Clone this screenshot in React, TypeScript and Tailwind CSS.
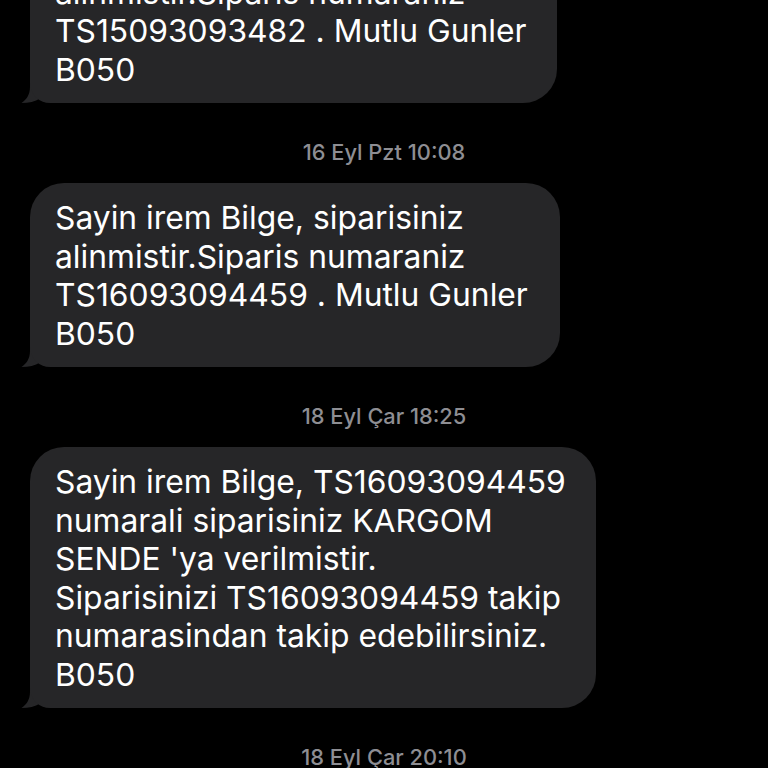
import React from 'react';

type Msg = { time?: string; lines: string[]; width: string };

const messages: Msg[] = [
  {
    lines: ['Sayin irem Bilge, siparisiniz', 'alinmistir.Siparis numaraniz', 'TS15093093482 . Mutlu Gunler', 'B050'],
    width: 'w-[527px]',
  },
  {
    time: '16 Eyl Pzt 10:08',
    lines: ['Sayin irem Bilge, siparisiniz', 'alinmistir.Siparis numaraniz', 'TS16093094459 . Mutlu Gunler', 'B050'],
    width: 'w-[530px]',
  },
  {
    time: '18 Eyl Çar 18:25',
    lines: [
      'Sayin irem Bilge, TS16093094459',
      'numarali siparisiniz KARGOM',
      "SENDE 'ya verilmistir.",
      'Siparisinizi TS16093094459 takip',
      'numarasindan takip edebilirsiniz.',
      'B050',
    ],
    width: 'w-[566px]',
  },
];

// iOS style tail, sits under the bubble's bottom-left corner
function Tail() {
  return (
    <svg className="absolute left-[-9px] bottom-0" width="40" height="30" viewBox="0 0 40 30">
      <path d="M9 0 L9 14 C9 22 5 27 0.5 30 C8 30 14 28.5 19 25.5 C23 28.5 28 30 38 30 L40 30 L40 0 Z" fill="#262628" />
    </svg>
  );
}

function Timestamp({ text }: { text: string }) {
  return (
    <div className="mt-[38px] mb-[20px] h-[22px] text-center text-[21.8px] leading-[22px] font-medium text-[#8e8e93]">
      {text}
    </div>
  );
}

function Bubble({ msg, first }: { msg: Msg; first?: boolean }) {
  return (
    <div className={`relative ml-[30px] ${msg.width} ${first ? 'mt-[-81px]' : ''}`}>
      <Tail />
      <div className="relative rounded-[34px] rounded-bl-[20px] bg-[#262628] pl-[25px] pt-[16px] pb-[14px] text-[31.8px] leading-[38.5px] text-white">
        {msg.lines.map((l, i) => (
          <div key={i} className="whitespace-nowrap">{l}</div>
        ))}
      </div>
    </div>
  );
}

export default function App() {
  return (
    <div
      className="flex h-[768px] w-full flex-col overflow-hidden bg-black"
      style={{ fontFamily: 'Inter, "Noto Sans", sans-serif' }}
    >
      {messages.map((m, i) => (
        <React.Fragment key={i}>
          {m.time && <Timestamp text={m.time} />}
          <Bubble msg={m} first={i === 0} />
        </React.Fragment>
      ))}
      <Timestamp text="18 Eyl Çar 20:10" />
    </div>
  );
}
